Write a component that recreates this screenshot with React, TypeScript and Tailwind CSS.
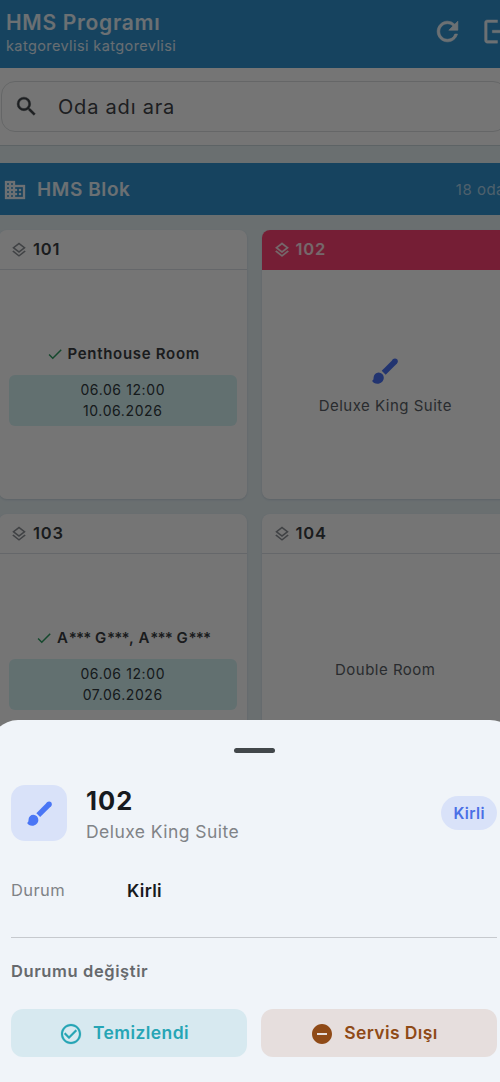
import type { ReactNode } from "react";
import {
  MdCheck,
  MdCheckCircleOutline,
  MdDomain,
  MdLogout,
  MdOutlineLayers,
  MdRefresh,
  MdRemoveCircle,
  MdSearch,
} from "react-icons/md";

type Room = {
  no: string;
  dirty?: boolean;
  guest?: string;
  checkIn?: string;
  checkOut?: string;
  type?: string;
};

const rooms: Room[] = [
  { no: "101", guest: "Penthouse Room", checkIn: "06.06 12:00", checkOut: "10.06.2026" },
  { no: "102", dirty: true, type: "Deluxe King Suite" },
  { no: "103", guest: "A*** G***, A*** G***", checkIn: "06.06 12:00", checkOut: "07.06.2026" },
  { no: "104", type: "Double Room" },
];

// thickens a Material icon without outlining its empty bounds path
const bold = "stroke-current [&>path[fill=none]]:stroke-none";

function BrushIcon({ className }: { className: string }) {
  return (
    <svg viewBox="0 0 26 26" className={className} fill="currentColor">
      <path d="M11.7 14.7 23 3.4" stroke="currentColor" strokeWidth="5.6" />
      <circle cx="23" cy="3.3" r="2.8" />
      <path d="M6.6 14.4a5.2 5.2 0 0 1 5.2 5.3c0 3.400-2.900 6-6.500 6C3 25.700 1 24.600 0 22.700c1.300 .1 1.500-1.500 1.600-3.100a5 5.200 0 0 1 5-5.200z" />
    </svg>
  );
}

function Header() {
  return (
    <header className="h-[68px] bg-[#3092cf] pl-4 pr-[5px] flex justify-between text-white/90">
      <div className="pt-[10px]">
        <h1 className="text-[21px] leading-[26px] font-semibold tracking-[0.7px]">HMS Programı</h1>
        <p className="text-[14.5px] leading-5 tracking-[0.4px] text-white/85">katgorevlisi katgorevlisi</p>
      </div>
      <div className="flex items-center gap-[19px] pb-[5px]">
        <MdRefresh className={`size-[31px] stroke-[0.5] ${bold}`} />
        <MdLogout className={`size-[31px] stroke-[0.3] ${bold}`} />
      </div>
    </header>
  );
}

function SearchBar() {
  return (
    <div className="h-[78px] bg-white border-b border-[#cbd8dd] px-[11px] pt-[13px]">
      <div className="h-[51px] rounded-[14px] border border-[#dcdfe1] flex items-center px-3 gap-[18px] text-[#3f4448]">
        <MdSearch className={`size-[25px] mr-px -mt-px stroke-[0.4] ${bold}`} />
        <span className="text-[20px] tracking-[0.8px]">Oda adı ara</span>
      </div>
    </div>
  );
}

function BlockBar() {
  return (
    <div className="mt-[17px] h-[52px] bg-[#3092cf] flex items-center pt-0.5 pl-[13px] pr-[13px] text-white/90">
      <MdDomain className={`size-6 -mt-px stroke-[0.3] ${bold}`} />
      <h2 className="ml-[10px] text-[19px] font-semibold tracking-[0.6px]">HMS Blok</h2>
      <span className="ml-auto text-[15px] tracking-[0.5px] text-white/60">18 oda</span>
    </div>
  );
}

// asterisks of a masked name are set closer together than its letters
function GuestName({ name }: { name: string }) {
  return (
    <span className="whitespace-pre">
      {name.split(/(\*+)/).map((part, i) => (
        <span key={i} className={part.startsWith("*") ? "tracking-[-0.8px]" : ""}>
          {part}
        </span>
      ))}
    </span>
  );
}

function RoomCard({ room }: { room: Room }) {
  return (
    <div className="h-[269px] rounded-lg bg-white overflow-hidden flex flex-col shadow-[0_1px_2px_rgba(60,80,130,0.15)]">
      <div
        className={`h-10 shrink-0 border-b flex items-center gap-[5px] pl-[11px] ${
          room.dirty ? "bg-[#ff4373] border-[#ff4373] text-white/85" : "border-[#dce0e8] text-[#3a3d42]"
        }`}
      >
        <MdOutlineLayers className={`size-[18px] ${room.dirty ? `stroke-[0.3] ${bold}` : "text-[#8d9196]"}`} />
        <span className="text-[16.5px] font-semibold tracking-[0.8px]">{room.no}</span>
      </div>
      <div className="flex-1 flex flex-col items-center justify-center px-[10px]">
        {room.guest && (
          <>
            <div className="flex items-center gap-[4px] text-[15px] leading-5 font-semibold tracking-[0.7px] text-[#3a3d42]">
              <MdCheck className="size-[18px] text-[#2f9e63]" />
              <GuestName name={room.guest} />
            </div>
            <div className="mt-[11px] h-[51px] w-full rounded-md bg-[#d6f3f5] flex flex-col items-center justify-center pt-px text-[14px] leading-[20.5px] tracking-[0.6px] text-[#30393d]">
              <span>{room.checkIn}</span>
              <span>{room.checkOut}</span>
            </div>
          </>
        )}
        {room.dirty && <BrushIcon className="size-[26px] mt-1 mb-[10px] text-[#4a72f5]" />}
        {room.type && (
          <span className="pt-0.5 text-[15px] leading-5 tracking-[0.5px] text-[#5a5f66]">{room.type}</span>
        )}
      </div>
    </div>
  );
}

function ActionButton({ icon, label, tone }: { icon: ReactNode; label: string; tone: string }) {
  return (
    <button className={`h-12 flex-1 rounded-xl flex items-center justify-center gap-[10px] pt-px pr-[10px] text-[17.5px] font-semibold tracking-[0.4px] ${tone}`}>
      {icon}
      {label}
    </button>
  );
}

function RoomSheet() {
  return (
    <section className="absolute inset-x-0 bottom-0 h-[362px] rounded-t-[28px] bg-[#f0f4f9] px-[21px]">
      <div className="mx-auto mt-7 h-[5px] w-[41px] rounded-full bg-[#42474b]" />
      <div className="mt-8 h-14 flex items-center">
        <div className="size-14 rounded-[14px] bg-[#d9e2f9] flex items-center justify-center">
          <BrushIcon className="size-[25px] text-[#4a76f5]" />
        </div>
        <div className="ml-[19px] pt-[5px]">
          <h3 className="text-[25.5px] leading-[32px] font-bold tracking-[1px] text-[#171a1e]">102</h3>
          <p className="text-[17.5px] leading-[29px] tracking-[0.45px] text-[#808387]">Deluxe King Suite</p>
        </div>
        <span className="ml-auto h-[34px] pt-px px-3 rounded-full bg-[#d9e2f9] flex items-center text-[15.5px] font-semibold tracking-[0.4px] text-[#4a6fe6]">
          Kirli
        </span>
      </div>
      <div className="mt-[38px] h-6 flex items-center">
        <span className="w-[116px] pb-0.5 text-[16.5px] tracking-[0.4px] text-[#808387]">Durum</span>
        <span className="text-[17.5px] font-semibold tracking-[0.3px] text-[#171a1e]">Kirli</span>
      </div>
      <hr className="mt-[34px] border-[#c6c9ce]" />
      <h4 className="mt-[21px] text-[16.5px] leading-6 font-semibold tracking-[0.6px] text-[#66696d]">Durumu değiştir</h4>
      <div className="mt-[26px] flex gap-[14px]">
        <ActionButton
          icon={<MdCheckCircleOutline className={`size-6 stroke-[0.2] ${bold}`} />}
          label="Temizlendi"
          tone="bg-[#d7e9f0] text-[#26a5b5]"
        />
        <ActionButton
          icon={<MdRemoveCircle className="size-6" />}
          label="Servis Dışı"
          tone="bg-[#e6dedd] text-[#8f4a17]"
        />
      </div>
    </section>
  );
}

export default function App() {
  return (
    <div className="h-[1082px] w-[500px] overflow-hidden font-['Inter',sans-serif]">
      {/* the screen is a little wider than the window and bleeds off both sides */}
      <div className="relative -ml-[10px] h-full w-[528px] overflow-hidden bg-[#e6f1f4]">
        <Header />
        <SearchBar />
        <BlockBar />
        <main className="grid grid-cols-2 gap-x-[15px] gap-y-[15px] px-[9px] pt-[15px]">
          {rooms.map((room) => (
            <RoomCard key={room.no} room={room} />
          ))}
        </main>
        <div className="absolute inset-0 bg-black/54" />
        <RoomSheet />
      </div>
    </div>
  );
}
